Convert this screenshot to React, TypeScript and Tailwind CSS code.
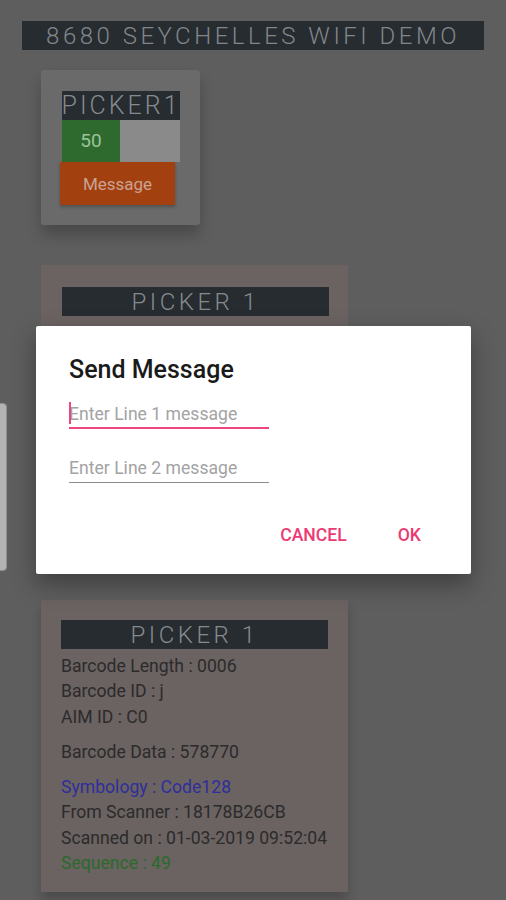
export default function App() {
  return (
    <div className="relative h-[900px] w-[506px] overflow-hidden bg-[#5e5e5e] font-['Roboto',sans-serif]">
      {/* page under the dim */}
      <div className="flex flex-col pt-[21px]">
        <div className="mx-[22px] flex h-[29px] items-center justify-center bg-[#262c30] text-[24px] font-light tracking-[3.5px] text-[#82868b]">
          8680 SEYCHELLES WIFI DEMO
        </div>

        <div className="ml-[41px] mt-[20px] h-[155px] w-[159px] rounded-[3px] bg-[#6a6a6a] pl-[21px] pt-[21px] shadow-[0_10px_14px_rgba(0,0,0,0.22)]">
          <div className="flex w-[118px] flex-col">
            <div className="flex h-[29px] items-center justify-center bg-[#262c30] text-[25px] font-light tracking-[3px] text-[#858a8e]">
              PICKER1
            </div>
            <div className="flex h-[42px]">
              <div className="flex w-[58px] items-center justify-center bg-[#2e6a2e] text-[19px] text-[#9cc29c]">50</div>
              <div className="flex-1 bg-[#8a8a8a]" />
            </div>
            <button className="-ml-[2px] flex h-[43px] w-[115px] items-center justify-center bg-[#a3400f] pt-[3px] text-[17px] text-[#cba293] shadow-[0_2px_3px_rgba(0,0,0,0.25)]">
              Message
            </button>
          </div>
        </div>

        <div className="ml-[41px] mt-[40px] h-[307px] w-[307px] bg-[#6b6262] px-[21px] pt-[22px]">
          <PickerHeader />
        </div>

        <div className="ml-[41px] mt-[28px] h-[292px] w-[307px] bg-[#6b6262] px-[20px] pt-[20px] shadow-[0_8px_10px_rgba(0,0,0,0.2)]">
          <PickerHeader />
          <div className="mt-[5px] text-[17.6px] leading-[25.3px] text-[#2b2b2b]">
            <p>Barcode Length : 0006</p>
            <p>Barcode ID : j</p>
            <p>AIM ID : C0</p>
            <p className="mt-[10px]">Barcode Data : 578770</p>
            <p className="mt-[10px] text-[#2f2f9a]">Symbology : Code128</p>
            <p>From Scanner : 18178B26CB</p>
            <p>Scanned on : 01-03-2019 09:52:04</p>
            <p className="text-[#2b6a2b]">Sequence : 49</p>
          </div>
        </div>
      </div>

      {/* edge of a panel peeking in from the left */}
      <div className="absolute left-[-6px] top-[403px] h-[168px] w-[13px] rounded-[4px] border border-[#8f8f8f] bg-[#b3b3b3]" />

      {/* dialog */}
      <div className="absolute left-[36px] top-[326px] h-[248px] w-[435px] rounded-[2px] bg-white pl-[33px] pr-[50px] pt-[30px] shadow-[0_10px_24px_rgba(0,0,0,0.35)]">
        <h2 className="text-[25px] font-medium leading-[28px] text-[#1a1a1a]">Send Message</h2>
        <div className="mt-[18px] w-[200px] border-b-2 border-[#f0467f] pb-[1px]">
          <div className="relative text-[17.6px] leading-[24px] text-[#a3a3a3]">
            <span className="absolute left-0 top-0 h-[22px] w-[2px] bg-[#f0467f]" />
            Enter Line 1 message
          </div>
        </div>
        <div className="mt-[27px] w-[200px] border-b border-[#8a8a8a] pb-[2px]">
          <div className="text-[17.6px] leading-[24px] text-[#a3a3a3]">Enter Line 2 message</div>
        </div>
        <div className="mt-[42px] flex justify-end gap-[51px] text-[17.6px] font-medium leading-[20px] text-[#ec3a72]">
          <span>CANCEL</span>
          <span>OK</span>
        </div>
      </div>
    </div>
  );
}

function PickerHeader() {
  return (
    <div className="flex h-[29px] w-[267px] items-center justify-center bg-[#262c30] text-[24px] font-light tracking-[3.5px] text-[#858a8e]">
      PICKER 1
    </div>
  );
}
